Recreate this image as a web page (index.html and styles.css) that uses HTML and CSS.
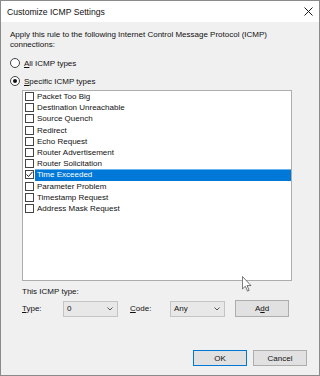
FILE: index.html
```html
<!DOCTYPE html>
<html>
<head>
<meta charset="utf-8">
<link rel="stylesheet" href="styles.css">
</head>
<body>
<div class="window">
  <div class="titlebar">
    <span class="title">Customize ICMP Settings</span>
    <svg class="close" viewBox="0 0 9 9"><path d="M0.5 0.5 L8.5 8.5 M8.5 0.5 L0.5 8.5" stroke="#1a1a1a" stroke-width="1"/></svg>
  </div>
  <div class="content">
    <p class="intro">Apply this rule to the following Internet Control Message Protocol (ICMP)<br>connections:</p>
    <div class="radio first"><span class="rb"></span><span><u>A</u>ll ICMP types</span></div>
    <div class="radio"><span class="rb on"></span><span><u>S</u>pecific ICMP types</span></div>
    <div class="group">
      <ul class="list">
        <li class="item"><span class="cb"></span><span class="label">Packet Too Big</span></li>
        <li class="item"><span class="cb"></span><span class="label">Destination Unreachable</span></li>
        <li class="item"><span class="cb"></span><span class="label">Source Quench</span></li>
        <li class="item"><span class="cb"></span><span class="label">Redirect</span></li>
        <li class="item"><span class="cb"></span><span class="label">Echo Request</span></li>
        <li class="item"><span class="cb"></span><span class="label">Router Advertisement</span></li>
        <li class="item"><span class="cb"></span><span class="label">Router Solicitation</span></li>
        <li class="item sel"><span class="cb"><svg viewBox="0 0 7 7"><path d="M0.5 3.5 L2.5 5.5 L6.5 0.8" fill="none" stroke="#222" stroke-width="1"/></svg></span><span class="label">Time Exceeded</span></li>
        <li class="item"><span class="cb"></span><span class="label">Parameter Problem</span></li>
        <li class="item"><span class="cb"></span><span class="label">Timestamp Request</span></li>
        <li class="item"><span class="cb"></span><span class="label">Address Mask Request</span></li>
      </ul>
      <div class="caption">This ICMP type:</div>
      <div class="typerow">
        <span class="lbl-type"><u>T</u>ype:</span>
        <div class="select"><span>0</span><svg class="chev" viewBox="0 0 6 4"><path d="M0.5 0.5 L3 3 L5.5 0.5" fill="none" stroke="#555" stroke-width="1"/></svg></div>
        <span class="lbl-code"><u>C</u>ode:</span>
        <div class="select"><span>Any</span><svg class="chev" viewBox="0 0 6 4"><path d="M0.5 0.5 L3 3 L5.5 0.5" fill="none" stroke="#555" stroke-width="1"/></svg></div>
        <div class="btn add">A<u>d</u>d</div>
      </div>
    </div>
    <div class="actions">
      <div class="btn default">OK</div>
      <div class="btn">Cancel</div>
    </div>
  </div>
  <svg class="cursor" viewBox="0 0 12 19"><path d="M0.5 0.5 L0.5 15.5 L4 12.2 L6.6 18 L8.6 17.1 L6.1 11.4 L10.8 11.4 Z" fill="#fff" stroke="#555" stroke-width="1" stroke-linejoin="round"/></svg>
</div>
</body>
</html>
```
FILE: styles.css
```css
html, body {
  margin: 0;
  padding: 0;
  background: #f0f0f0;
}
.window {
  width: 320px;
  height: 376px;
  box-sizing: border-box;
  border: 1px solid #8a8a8a;
  background: #f0f0f0;
  display: flex;
  flex-direction: column;
  position: relative;
  font-family: "Liberation Sans", Arial, sans-serif;
  font-size: 8px;
  color: #111;
}
.titlebar {
  height: 21px;
  background: #fff;
  display: flex;
  align-items: center;
  justify-content: space-between;
  padding: 0 6px 0 6px;
}
.title {
  font-size: 8.6px;
  color: #111;
}
.close {
  width: 9px;
  height: 9px;
}
.content {
  flex: 1;
  display: flex;
  flex-direction: column;
  padding: 8px 12px 9px 9px;
}
.intro {
  margin: 0;
  line-height: 10px;
}
.radio {
  display: flex;
  align-items: center;
  gap: 4px;
  height: 14px;
  margin-top: 4px;
}
.radio.first {
  margin-top: 6px;
}
.rb {
  width: 10px;
  height: 10px;
  box-sizing: border-box;
  border: 1px solid #444;
  border-radius: 50%;
  background: #fff;
  display: flex;
  align-items: center;
  justify-content: center;
}
.rb.on::after {
  content: "";
  width: 4px;
  height: 4px;
  border-radius: 50%;
  background: #111;
}
.group {
  margin: 2px 0 0 12px;
}
.list {
  list-style: none;
  margin: 0;
  padding: 0;
  width: 270px;
  height: 191px;
  box-sizing: border-box;
  border: 1px solid #adadad;
  background: #fff;
}
.item {
  display: flex;
  align-items: center;
  height: 11.2px;
}
.cb {
  width: 9px;
  height: 9px;
  box-sizing: border-box;
  border: 1px solid #444;
  margin: 0 1px 0 2px;
  background: #fff;
  display: flex;
  align-items: center;
  justify-content: center;
}
.cb svg {
  width: 7px;
  height: 7px;
}
.label {
  flex: 1;
  height: 100%;
  padding-left: 2px;
  display: flex;
  align-items: center;
}
.item.sel .label {
  background: #0078d7;
  color: #fff;
  box-shadow: inset 0 1px 0 #6cb4ee;
}
.caption {
  margin-top: 6px;
  line-height: 10px;
}
.typerow {
  display: flex;
  align-items: center;
  margin-top: 3px;
  height: 17px;
}
.lbl-type {
  width: 41px;
}
.lbl-code {
  width: 40px;
  margin-left: 12px;
}
.select {
  width: 55px;
  height: 16px;
  box-sizing: border-box;
  border: 1px solid #c4c4c4;
  background: #e8e8e8;
  display: flex;
  align-items: center;
  justify-content: space-between;
  padding: 0 4px 0 3px;
}
.chev {
  width: 6px;
  height: 4px;
}
.btn {
  width: 54px;
  height: 16px;
  box-sizing: border-box;
  border: 1px solid #adadad;
  background: #e1e1e1;
  display: flex;
  align-items: center;
  justify-content: center;
}
.btn.add {
  margin-left: 10px;
  height: 17px;
}
.actions {
  margin-top: auto;
  display: flex;
  justify-content: flex-end;
  gap: 6px;
}
.btn.default {
  border-color: #0078d7;
}
.cursor {
  position: absolute;
  left: 241px;
  top: 275px;
  width: 10px;
  height: 16px;
}
```
